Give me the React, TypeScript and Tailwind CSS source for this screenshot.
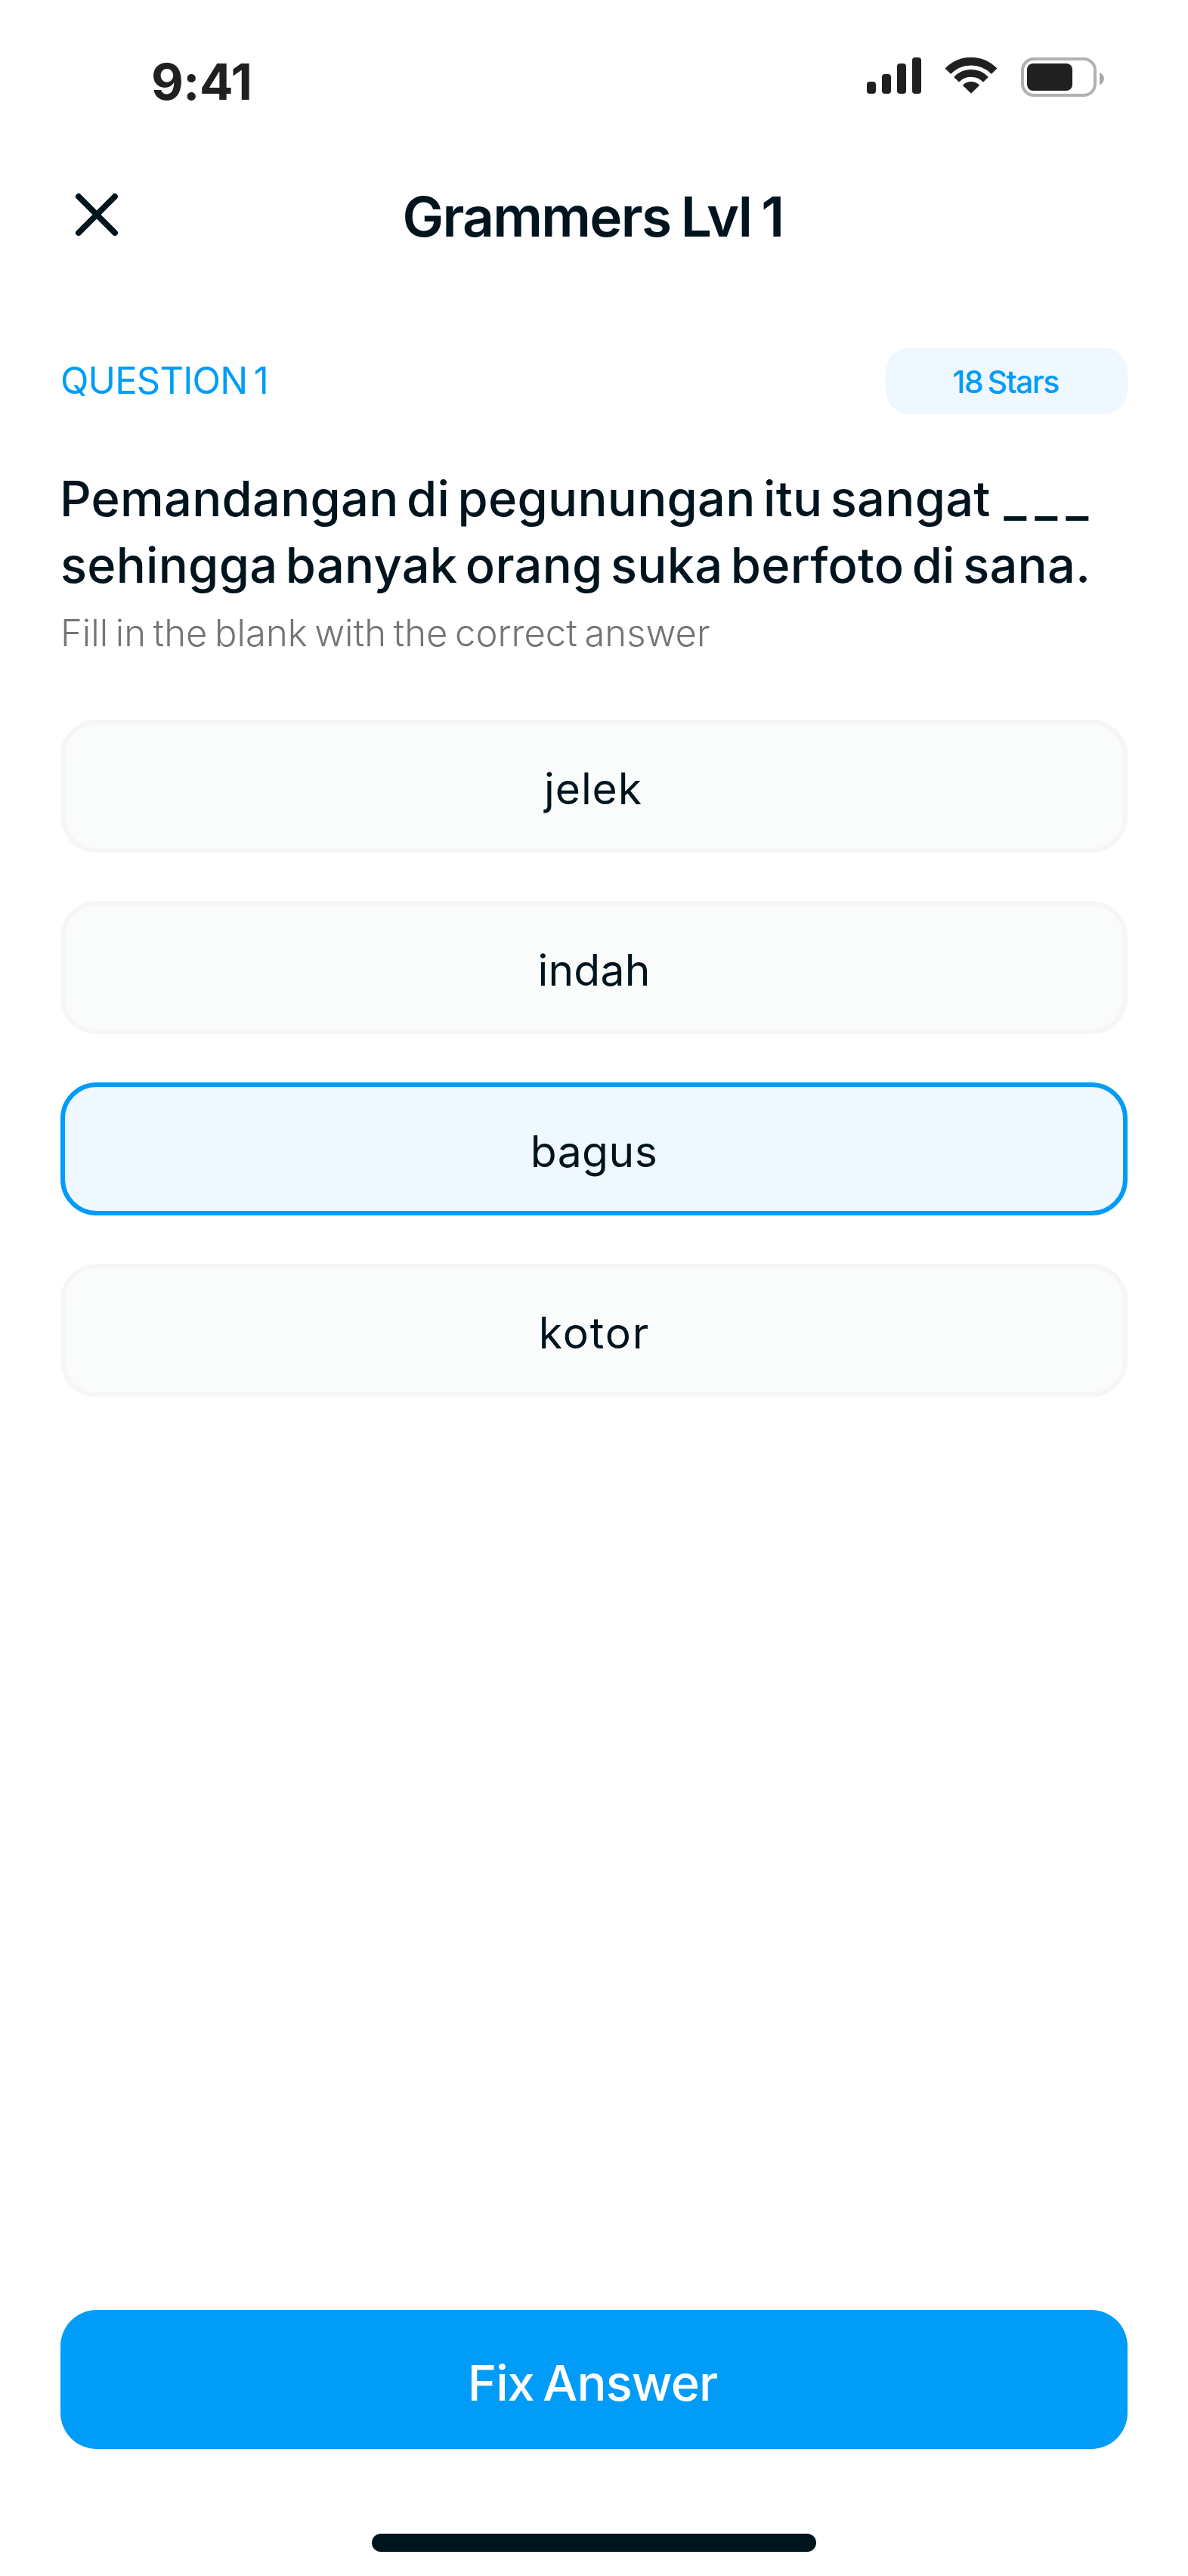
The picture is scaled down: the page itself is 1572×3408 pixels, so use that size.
import React, { useState } from "react";
import clsx from "clsx";

type Option = { label: string; text: string };

const OPTIONS: Option[] = [
  { label: "jelek", text: "tracking-[0.91px] pr-[2px]" },
  { label: "indah", text: "tracking-[0.23px]" },
  { label: "bagus", text: "tracking-[0.47px]" },
  { label: "kotor", text: "tracking-[1.89px] pl-[1px]" },
];

function SignalIcon() {
  return (
    <svg width="72" height="48" viewBox="0 0 72 48" fill="#202020">
      <rect x="0" y="32" width="12" height="16" rx="4" />
      <rect x="20" y="22" width="12" height="26" rx="4" />
      <rect x="40" y="8" width="12" height="40" rx="4" />
      <rect x="60" y="0" width="12" height="48" rx="4" />
    </svg>
  );
}

function WifiIcon() {
  return (
    <svg
      width="70"
      height="48"
      viewBox="0 0.5 70 48"
      fill="#202020"
      stroke="#202020"
      strokeWidth="2"
      strokeLinejoin="round"
    >
      <path d="M2 15A46.6 46.6 0 0 1 68 15L61.8 21.1A38 38 0 0 0 8.2 21.1Z" />
      <path d="M13.5 26.4A30.5 30.5 0 0 1 56.5 26.4L51 31.8A22.8 22.8 0 0 0 19 31.8Z" />
      <path d="M25.2 37.3A14.5 14.5 0 0 1 44.8 37.3L35 46.8Z" />
    </svg>
  );
}

function BatteryIcon() {
  return (
    <svg width="110" height="52" viewBox="0 0 110 52">
      <rect x="2" y="2" width="96" height="48" rx="15" fill="none" stroke="#b1b1b1" strokeWidth="4" />
      <rect x="8" y="8" width="60" height="36" rx="8" fill="#202020" />
      <path d="M104 20C107.5 21.3 109.8 24.6 109.8 28.2C109.8 31.8 107.5 35 104 36.3Z" fill="#a8a8a8" />
    </svg>
  );
}

function StatusBar() {
  return (
    <div className="flex h-[176px] items-start justify-between pl-[200px] pr-[111px]">
      <span className="pt-[68px] text-[66px] font-[650] leading-[80px] tracking-[-0.5px] text-[#202020]">
        9:41
      </span>
      <div className="flex items-start gap-[31px] pt-[76px]">
        <SignalIcon />
        <WifiIcon />
        <BatteryIcon />
      </div>
    </div>
  );
}

function Header() {
  return (
    <header className="mt-[60px] grid h-24 grid-cols-[96px_1fr_96px] px-20">
      <button type="button" aria-label="Close" className="size-24">
        <svg width="96" height="96" viewBox="0 0 96 96" stroke="#00141e" strokeWidth="8" strokeLinecap="round">
          <path d="M24 24L72 72M72 24L24 72" />
        </svg>
      </button>
      <h1 className="pr-[3px] text-center text-[73px] font-semibold leading-[102px] tracking-[-1.7px] [word-spacing:-3.5px]">
        Grammers Lvl 1
      </h1>
    </header>
  );
}

export default function App() {
  const [selected, setSelected] = useState("bagus");

  return (
    <div className="flex h-[3408px] w-[1572px] flex-col overflow-hidden bg-white font-['Inter',sans-serif] text-[#00141e]">
      <StatusBar />
      <Header />

      <main className="flex flex-1 flex-col px-20 pt-32">
        <div className="flex h-[88px] justify-between">
          <span className="text-[49px] leading-[88px] tracking-[-0.85px] text-[#009cf7] [word-spacing:-4.5px]">
            QUESTION 1
          </span>
          <span className="h-[88px] w-80 rounded-[32px] bg-[#eff7ff] pr-[3px] text-center text-[41px] font-medium leading-[90px] tracking-[-1.5px] text-[#009cf7] [word-spacing:-3px]">
            18 Stars
          </span>
        </div>

        <h2 className="mt-[68px] whitespace-nowrap text-[65px] font-medium leading-[88px] tracking-[0.27px] [word-spacing:-7.2px]">
          <span className="-ml-px block">
            Pemandangan di pegunungan itu sangat <span className="ml-[7px] tracking-[10.9px]">___</span>
          </span>
          <span className="block">sehingga banyak orang suka berfoto di sana.</span>
        </h2>
        <p className="mt-[14px] text-[49px] font-light leading-[64px] text-[#757575] [word-spacing:-4.2px]">
          Fill in the blank with the correct answer
        </p>

        <div className="mt-[82px] flex flex-col gap-16">
          {OPTIONS.map(({ label, text }) => (
            <button
              key={label}
              type="button"
              onClick={() => setSelected(label)}
              className={clsx(
                "flex h-44 items-start justify-center rounded-[48px] border-[6px]",
                selected === label ? "border-[#009cf7] bg-[#eff7ff]" : "border-[#f6f6f6] bg-[#fafcfb]",
              )}
            >
              <span className={clsx("text-[57px] leading-[171px]", text)}>{label}</span>
            </button>
          ))}
        </div>

        <button
          type="button"
          className="mt-auto flex h-[184px] items-start justify-center rounded-[48px] bg-[#009cf7] pr-1 text-[65px] font-medium leading-[193px] tracking-[-0.9px] text-white [word-spacing:-5px]"
        >
          Fix Answer
        </button>
      </main>

      <div className="mx-auto mb-8 mt-28 h-6 w-[588px] shrink-0 rounded-full bg-[#00141e]" />
    </div>
  );
}
